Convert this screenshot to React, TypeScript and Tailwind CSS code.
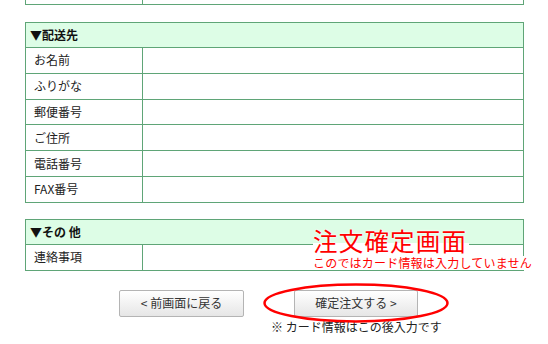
import type React from "react";

const font = "font-['Noto_Sans_CJK_JP','Noto_Sans',sans-serif]";

const Row: React.FC<{ label: string }> = ({ label }) => (
  <div className="grid grid-cols-[117px_1fr] h-[25.8px] border-b border-[#5fa577]">
    <div className="border-r border-[#5fa577] pl-[8px] flex items-center text-[12px] text-[#222]">
      {label}
    </div>
    <div />
  </div>
);

const Header: React.FC<{ title: string }> = ({ title }) => (
  <div className="h-[25px] bg-[#ddfde6] border-b border-[#5fa577] pl-[4px] flex items-center text-[12px] font-bold text-[#111]">
    {title}
  </div>
);

const App: React.FC = () => {
  const shipping = ["お名前", "ふりがな", "郵便番号", "ご住所", "電話番号", "FAX番号"];

  return (
    <div className={`relative w-[548px] h-[344px] bg-white overflow-hidden ${font}`}>
      {/* tail of the previous table */}
      <div className="ml-[25px] w-[499px] h-[5px] border-x border-b border-[#5fa577] grid grid-cols-[117px_1fr]">
        <div className="border-r border-[#5fa577]" />
        <div />
      </div>

      <div className="ml-[25px] mt-[17px] w-[499px] border-x border-t border-[#5fa577]">
        <Header title="▼配送先" />
        {shipping.map((s) => (
          <Row key={s} label={s} />
        ))}
      </div>

      <div className="ml-[25px] mt-[16px] w-[499px] border-x border-t border-[#5fa577]">
        <Header title="▼その 他" />
        <div className="grid grid-cols-[117px_1fr] h-[26px] border-b border-[#5fa577]">
          <div className="border-r border-[#5fa577] pl-[8px] flex items-center text-[12px] text-[#222]">
            連絡事項
          </div>
          <div />
        </div>
      </div>

      <div className="flex mt-[19px] ml-[119px] gap-[50px]">
        <button className="w-[125px] h-[27px] border border-[#b4b4b4] rounded-[2px] bg-gradient-to-b from-white to-[#e6e6e6] text-[12px] text-[#333] flex items-center justify-center">
          &lt; 前画面に戻る
        </button>
        <div className="flex flex-col items-start">
          <button className="w-[124px] h-[27px] border border-[#b4b4b4] rounded-[2px] bg-gradient-to-b from-white to-[#e6e6e6] text-[12px] text-[#333] flex items-center justify-center">
            確定注文する &gt;
          </button>
          <p className="-ml-[23px] mt-[2px] text-[12px] leading-[16px] text-[#222] whitespace-nowrap">
            ※ カード情報はこの後入力です
          </p>
        </div>
      </div>

      {/* annotation overlay */}
      <div className="absolute left-[313px] top-[243px] w-[156px] h-[4px] bg-white" />
      <div className="absolute left-[313px] top-[229px] text-[24.5px] leading-[24px] text-[#ff0000] tracking-[1.2px] whitespace-nowrap [text-shadow:0_0_2px_white,0_0_2px_white]">
        注文確定画面
      </div>
      <div className="absolute left-[313px] top-[256px] text-[12px] leading-[14px] tracking-[0.2px] text-[#ff0000] bg-white whitespace-nowrap">
        このではカード情報は入力していません
      </div>
      <svg className="absolute left-[262px] top-[282px]" width="188" height="42" viewBox="0 0 188 42">
        <ellipse cx="94" cy="21" rx="91.5" ry="18.5" fill="none" stroke="#ff0000" strokeWidth="2.5" />
      </svg>
    </div>
  );
};

export default App;
